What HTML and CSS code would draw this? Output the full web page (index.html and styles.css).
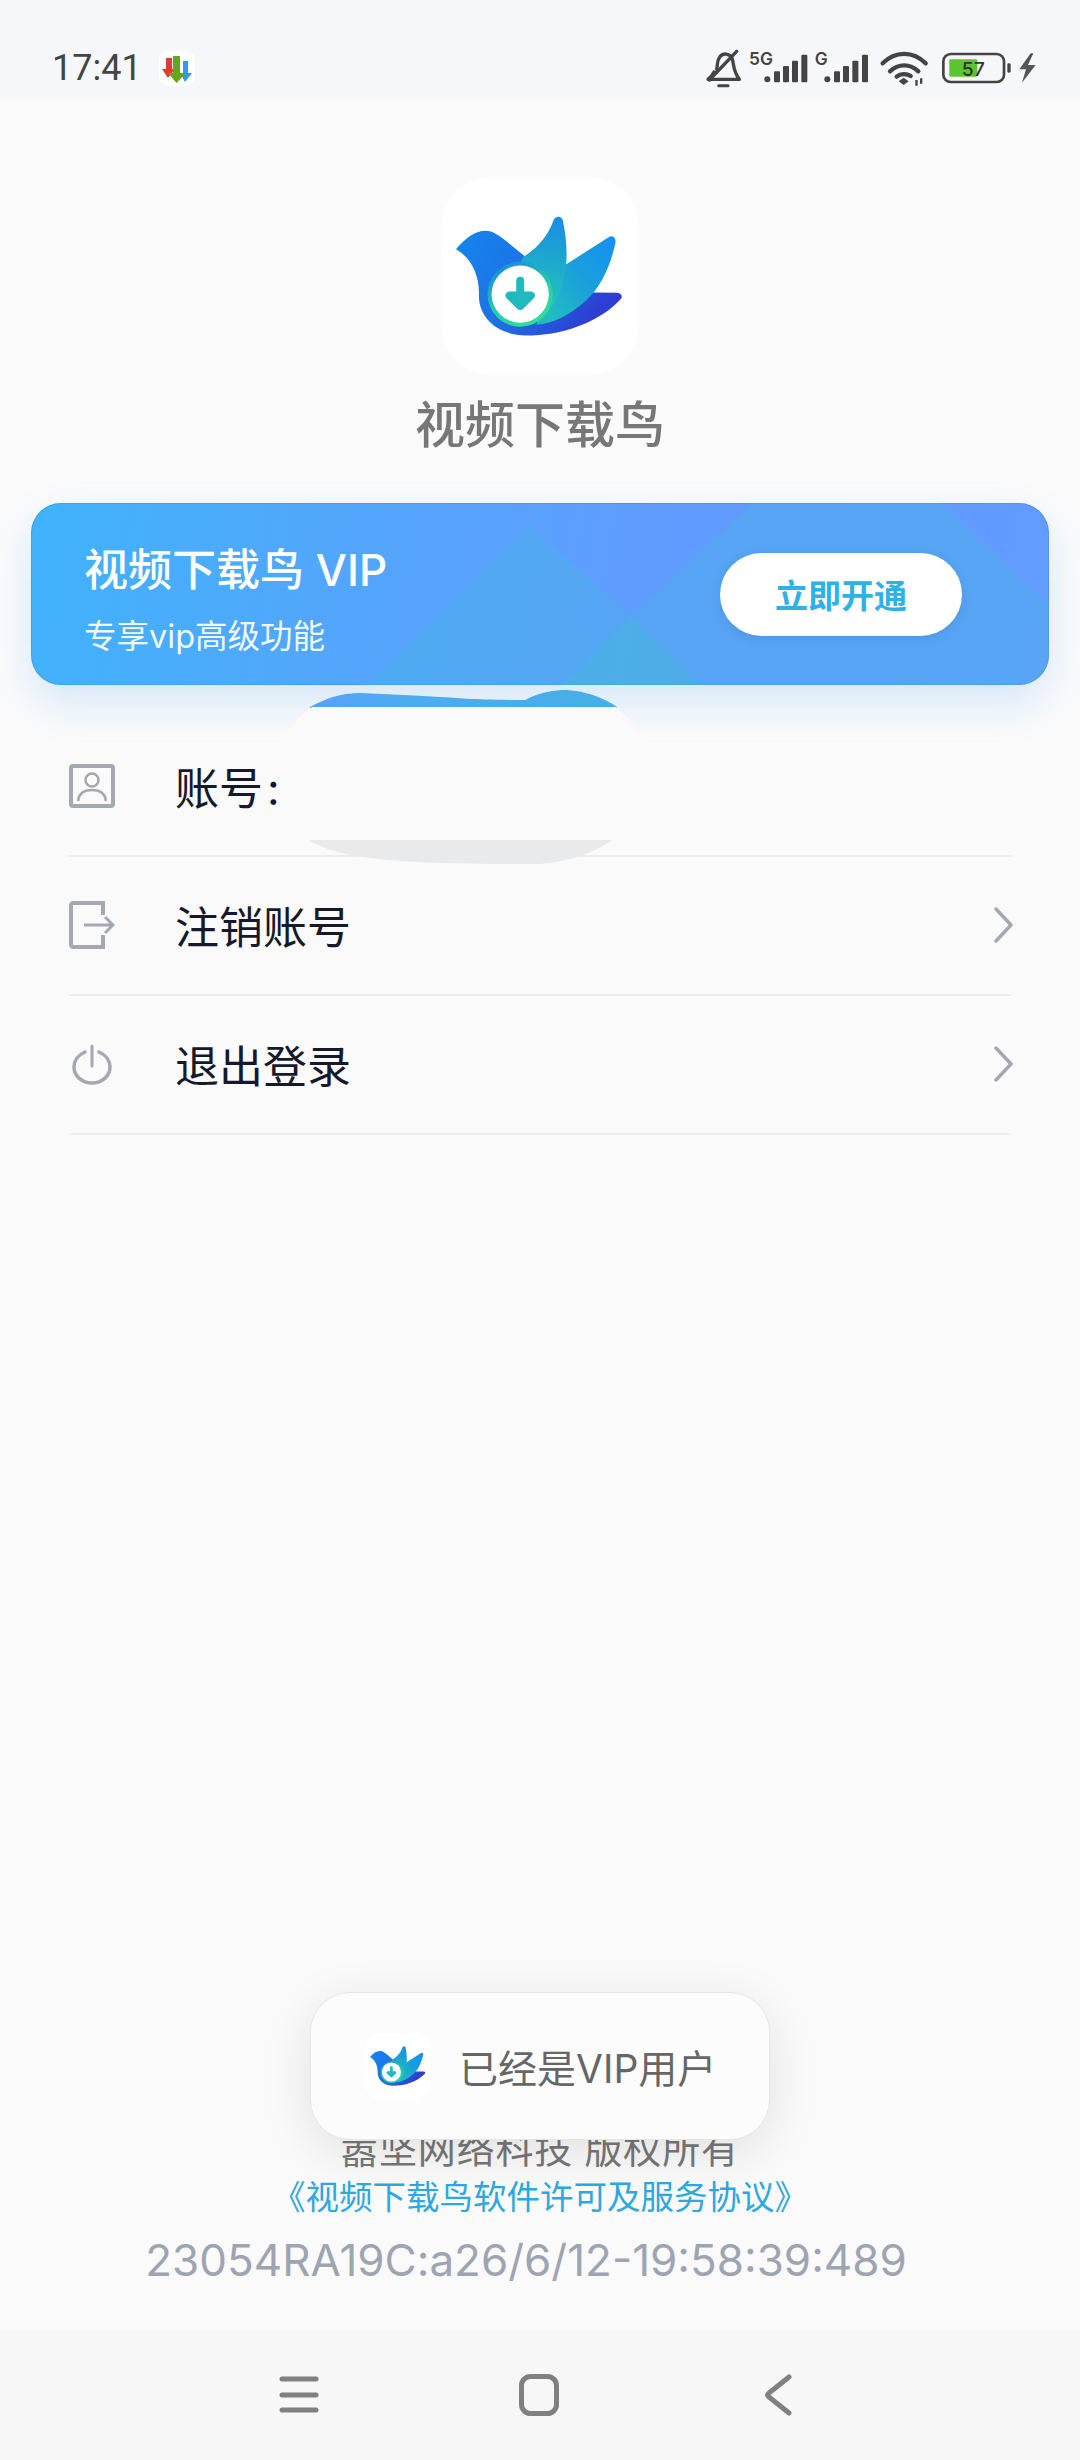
FILE: index.html
```html
<!DOCTYPE html>
<html lang="zh-CN">
<head>
<meta charset="utf-8">
<title>视频下载鸟</title>
<link rel="stylesheet" href="styles.css">
</head>
<body>
<svg class="defs" aria-hidden="true">
  <defs>
    <linearGradient id="gBody" x1="0" y1="0" x2="1" y2="0.4">
      <stop offset="0" stop-color="#1486ee"/><stop offset="0.55" stop-color="#1f6fe4"/><stop offset="1" stop-color="#2d3ed2"/>
    </linearGradient>
    <linearGradient id="gRight" x1="1" y1="0" x2="0" y2="1">
      <stop offset="0" stop-color="#1490f2"/><stop offset="0.45" stop-color="#1a9fdc"/><stop offset="0.85" stop-color="#20bcc0"/>
    </linearGradient>
    <linearGradient id="gMid" x1="0.6" y1="0" x2="0.5" y2="1">
      <stop offset="0" stop-color="#1a8ee2"/><stop offset="0.5" stop-color="#1db0c8"/><stop offset="0.85" stop-color="#22c9b4"/>
    </linearGradient>
    <linearGradient id="gRing" x1="0.2" y1="0" x2="0.7" y2="1">
      <stop offset="0" stop-color="#1a86e6"/><stop offset="0.55" stop-color="#25cda6"/><stop offset="1" stop-color="#2fe09a"/>
    </linearGradient>
    <symbol id="bird" viewBox="183 80 595 595">
      <rect x="183" y="80" width="595" height="595" rx="145" fill="#fff"/>
      <path fill="url(#gBody)" d="M228 297C262 256 298 235 330 243C362 252 396 290 432 316L470 360L640 427L712 428C728 430 730 442 720 450C650 522 540 556 440 556C350 556 294 500 297 432C298 372 272 322 228 297Z"/>
      <path fill="url(#gRight)" d="M555 345L688 260C700 254 710 264 707 278C692 350 660 415 620 450C570 495 520 520 470 524L500 400Z"/>
      <path fill="url(#gMid)" d="M430 320C478 292 508 250 522 208C528 196 546 196 549 210C562 270 566 340 550 395C532 465 490 510 440 526L380 440Z"/>
      <circle cx="421" cy="432" r="98" fill="url(#gRing)"/>
      <circle cx="421" cy="432" r="86" fill="#fff"/>
      <path fill="#20b9bf" d="M409 392a12 12 0 0 1 24 0V424H452C464 424 470 436 461 445L430 476C425 481 417 481 412 476L381 445C372 436 378 424 390 424H409Z"/>
    </symbol>
  </defs>
</svg>

<div class="page">
  <header class="status-bar">
    <div class="status-left">
      <span class="clock">17:41</span>
      <svg class="dl-icon" viewBox="0 0 36 35">
        <rect width="36" height="35" rx="9" fill="#fff"/>
        <path fill="#e23b32" d="M7 7H13V18H16L9 27L3 18H7Z"/>
        <path fill="#2e9bf0" d="M24 10H29V22H33L26 31L21 22H24Z"/>
        <path fill="#66a61e" d="M14 5H21V22H27L17.500 32L9 22H14Z"/>
      </svg>
    </div>
    <svg class="status-right" viewBox="0 0 1110 180">
      <g fill="none" stroke="#444" stroke-width="10" stroke-linecap="round" stroke-linejoin="round">
        <path d="M80 118C84 100 80 92 90 80C100 68 118 70 126 84C132 100 128 122 148 148H54C64 140 68 134 72 126"/>
        <path d="M58 150L140 64"/>
        <path d="M86 167H114" stroke-width="9"/>
      </g>
      <text class="sig-text" x="177" y="106">5G</text>
      <g fill="#444">
        <rect x="223" y="139" width="18" height="18" rx="9"/>
        <rect x="252" y="124" width="18" height="33" rx="3"/>
        <rect x="279" y="108" width="18" height="49" rx="3"/>
        <rect x="306" y="92" width="18" height="65" rx="3"/>
        <rect x="334" y="74" width="18" height="83" rx="3"/>
      </g>
      <text class="sig-text" x="374" y="106">G</text>
      <g fill="#444">
        <rect x="403" y="139" width="18" height="18" rx="9"/>
        <rect x="432" y="124" width="18" height="33" rx="3"/>
        <rect x="459" y="108" width="18" height="49" rx="3"/>
        <rect x="487" y="92" width="18" height="65" rx="3"/>
        <rect x="516" y="74" width="18" height="83" rx="3"/>
      </g>
      <g fill="none" stroke="#444" stroke-width="13" stroke-linecap="round">
        <path d="M578 100C615 62 670 62 707 100"/>
        <path d="M600 124C625 100 660 100 685 124"/>
        <path d="M620 140C632 130 650 130 662 138"/>
      </g>
      <path fill="#444" d="M641 143L656 154L641 165L626 154Z"/>
      <path fill="#444" d="M676 150h7v17h-7zM690 145h7v16h-7z"/>
      <rect x="760" y="72" width="182" height="84" rx="22" fill="none" stroke="#444" stroke-width="8"/>
      <rect x="778" y="88" width="84" height="52" rx="4" fill="#5bc52f"/>
      <text class="batt-text" x="850" y="139">57</text>
      <rect x="952" y="100" width="10" height="28" rx="4" fill="#444"/>
      <path fill="#555" d="M1022 70L988 118H1008L996 158L1037 105H1014L1030 70Z"/>
    </svg>
  </header>

  <main class="content">
    <section class="brand">
      <svg class="app-logo"><use href="#bird"/></svg>
      <h1 class="app-name">视频下载鸟</h1>
    </section>

    <section class="banner">
      <svg class="banner-bg" viewBox="31 503 1018 182" preserveAspectRatio="none">
        <path fill="#3ebcd6" fill-opacity="0.27" d="M367 685L530 525L630 617L753 503H940L1049 605V685Z"/>
        <path fill="#3cc2d0" fill-opacity="0.32" d="M563 685L630 617L700 685Z"/>
      </svg>
      <div class="banner-text">
        <div class="banner-title">视频下载鸟 VIP</div>
        <div class="banner-sub">专享vip高级功能</div>
      </div>
      <button class="banner-btn">立即开通</button>
    </section>

    <ul class="menu">
      <li class="menu-row">
        <svg class="menu-icon" viewBox="0 0 46 48">
          <rect x="2" y="4" width="42" height="40" rx="2" fill="none" stroke="#a3a8b3" stroke-width="4"/>
          <circle cx="23" cy="18" r="6.500" fill="none" stroke="#a3a8b3" stroke-width="2.500"/>
          <path d="M9 39C10 30 16 28 23 28C30 28 36 30 37 39" fill="none" stroke="#a3a8b3" stroke-width="2.500"/>
        </svg>
        <span class="menu-label">账号&#8202;:</span>
      </li>
      <li class="menu-row">
        <svg class="menu-icon" viewBox="0 0 46 48">
          <path d="M34 14V2H4C3 2 2 3 2 4V44C2 45 3 46 4 46H34V34" fill="none" stroke="#a3a8b3" stroke-width="4"/>
          <path d="M15 24H43M36 16L44 24L36 32" fill="none" stroke="#a3a8b3" stroke-width="3"/>
        </svg>
        <span class="menu-label">注销账号</span>
        <svg class="chevron" viewBox="0 0 20 36"><path d="M2 2L17 18L2 34" fill="none" stroke="#a3a8b3" stroke-width="3.500" stroke-linecap="round" stroke-linejoin="round"/></svg>
      </li>
      <li class="menu-row">
        <svg class="menu-icon" viewBox="0 0 46 48">
          <path d="M16 12C9 15 5 21 5 27C5 36 13 43 23 43C33 43 41 36 41 27C41 21 37 15 30 12" fill="none" stroke="#a3a8b3" stroke-width="3.500" stroke-linecap="round"/>
          <path d="M23 6V26" fill="none" stroke="#a3a8b3" stroke-width="3" stroke-linecap="round"/>
        </svg>
        <span class="menu-label">退出登录</span>
        <svg class="chevron" viewBox="0 0 20 36"><path d="M2 2L17 18L2 34" fill="none" stroke="#a3a8b3" stroke-width="3.500" stroke-linecap="round" stroke-linejoin="round"/></svg>
      </li>
    </ul>

    <footer class="legal">
      <div class="copyright">嚣坚网络科技 版权所有</div>
      <div class="agreement">《视频下载鸟软件许可及服务协议》</div>
      <div class="version">23054RA19C:a26/6/12-19:58:39:489</div>
    </footer>
  </main>

  <nav class="nav-bar">
    <svg class="nav-icon" viewBox="0 0 40 42">
      <path d="M3 5H37M3 21H37M3 36H37" fill="none" stroke="#808080" stroke-width="5" stroke-linecap="round"/>
    </svg>
    <svg class="nav-icon" viewBox="0 0 40 42">
      <rect x="2.500" y="2.500" width="35" height="37" rx="9" fill="none" stroke="#808080" stroke-width="5"/>
    </svg>
    <svg class="nav-icon" viewBox="0 0 40 42">
      <path d="M30 3L10 19C8 20.500 8 21.500 10 23L30 39" fill="none" stroke="#808080" stroke-width="5" stroke-linecap="round"/>
    </svg>
  </nav>

  <svg class="redaction" viewBox="0 0 400 190">
    <defs>
      <linearGradient id="gScrib" x1="0" y1="0" x2="1" y2="0">
        <stop offset="0" stop-color="#5aa0fb"/><stop offset="0.3" stop-color="#4dabf0"/><stop offset="1" stop-color="#46aee6"/>
      </linearGradient>
    </defs>
    <path fill="url(#gScrib)" d="M40 27C60 16 75 13 90 13C120 14 150 16 170 17C190 18 205 20 255 20C270 12 285 10 297 10C315 11 335 18 347 27L347 40H40Z"/>
    <path fill="#e9eaec" d="M38 160C60 172 80 177 130 181C170 184 220 184 270 184C295 182 320 175 343 160V150H38Z"/>
    <path fill="#fafafb" d="M42 27H346C368 45 378 70 378 92C378 120 365 145 343 160H38C15 140 7 115 7 92C7 68 20 42 42 27Z"/>
  </svg>

  <div class="toast">
    <svg class="toast-logo"><use href="#bird"/></svg>
    <span class="toast-text">已经是VIP用户</span>
  </div>
</div>
</body>
</html>
```

FILE: styles.css
```css
* { box-sizing: border-box; }

html, body {
  margin: 0;
  padding: 0;
}

body {
  font-family: "Inter", "Noto Sans CJK SC", sans-serif;
  background: #fafafb;
}

.defs {
  position: absolute;
  width: 0;
  height: 0;
}

.page {
  position: relative;
  width: 1080px;
  height: 2460px;
  display: flex;
  flex-direction: column;
  overflow: hidden;
  background: #fafafb;
}

/* status bar */
.status-bar {
  flex: none;
  height: 100px;
  padding: 30px 20px 0 52px;
  display: flex;
  justify-content: space-between;
  align-items: flex-start;
  background: #f6f7fb;
}

.status-left {
  height: 76px;
  display: flex;
  align-items: center;
  gap: 17px;
}

.clock {
  font-family: "Roboto", sans-serif;
  font-size: 36px;
  font-weight: 400;
  color: #444;
}

.dl-icon {
  width: 36px;
  height: 35px;
}

.status-right {
  width: 370px;
  height: 60px;
}

.sig-text {
  font-family: "Inter", sans-serif;
  font-size: 52px;
  font-weight: 600;
  fill: #444;
}

.batt-text {
  font-family: "Inter", sans-serif;
  font-size: 58px;
  font-weight: 500;
  fill: #333;
  text-anchor: middle;
}

/* content */
.content {
  flex: 1;
  display: flex;
  flex-direction: column;
}

.brand {
  padding-top: 77px;
  display: flex;
  flex-direction: column;
  align-items: center;
}

.app-logo {
  width: 198px;
  height: 198px;
}

.app-name {
  margin: 20px 0 0;
  font-size: 50px;
  line-height: 60px;
  font-weight: 500;
  color: #777;
}

/* banner */
.banner {
  position: relative;
  margin: 48px 31px 0;
  height: 182px;
  padding: 0 87px 0 53px;
  display: flex;
  justify-content: space-between;
  align-items: center;
  border-radius: 30px;
  overflow: visible;
  background: linear-gradient(100deg, #40b3fc 0%, #52a6fc 30%, #5f9cfe 60%, #639bff 100%);
  box-shadow: 0 18px 40px rgba(70, 160, 240, 0.2), inset 0 0 0 1px rgba(40, 120, 190, 0.25);
}

.banner-bg {
  position: absolute;
  inset: 0;
  width: 100%;
  height: 100%;
  border-radius: 30px;
}

.banner-text {
  position: relative;
  align-self: flex-start;
  padding-top: 37px;
  color: #fff;
}

.banner-title {
  font-size: 44px;
  line-height: 60px;
  font-weight: 500;
  white-space: pre;
}

.banner-sub {
  margin-top: 15px;
  font-size: 32.500px;
  line-height: 44px;
  opacity: 0.92;
}

.banner-btn {
  position: relative;
  width: 242px;
  height: 83px;
  padding: 0;
  border: 0;
  border-radius: 42px;
  background: #fff;
  box-shadow: 0 3px 10px rgba(40, 100, 170, 0.2);
  font-family: inherit;
  font-size: 33px;
  font-weight: 600;
  color: #2fb0e6;
}

/* menu */
.menu {
  list-style: none;
  margin: 33px 69px 0;
  padding: 0;
}

.menu-row {
  height: 139px;
  padding-bottom: 2px;
  display: flex;
  align-items: center;
  border-bottom: 2px solid #ecedf0;
}

.menu-icon {
  flex: none;
  width: 46px;
  height: 48px;
  margin-right: 60px;
}

.menu-label {
  font-size: 44px;
  color: #15192b;
}

.chevron {
  width: 20px;
  height: 36px;
  margin-left: auto;
  margin-right: -3px;
}

/* footer */
.legal {
  margin-top: auto;
  padding-bottom: 40px;
  display: flex;
  flex-direction: column;
  align-items: center;
}

.copyright {
  font-size: 38px;
  line-height: 44px;
  letter-spacing: 0.800px;
  color: #777;
}

.agreement {
  margin-top: 4px;
  font-size: 33.500px;
  line-height: 44px;
  color: #2ea8e0;
}

.version {
  margin-top: 11px;
  padding-right: 28px;
  font-size: 44px;
  line-height: 60px;
  color: #9ea5b2;
  white-space: nowrap;
}

/* navigation */
.nav-bar {
  flex: none;
  height: 130px;
  padding-right: 2px;
  display: flex;
  justify-content: center;
  align-items: center;
  gap: 200px;
  background: #f7f7f7;
}

.nav-icon {
  width: 40px;
  height: 42px;
}

/* overlays */
.redaction {
  position: absolute;
  left: 270px;
  top: 680px;
  width: 400px;
  height: 190px;
}

.toast {
  position: absolute;
  left: 310px;
  top: 1992px;
  width: 460px;
  height: 148px;
  padding-left: 54px;
  display: flex;
  align-items: center;
  gap: 28px;
  border: 1px solid #e6e6e6;
  border-radius: 40px;
  background: #fcfcfc;
  box-shadow: 0 12px 50px rgba(0, 0, 0, 0.1);
}

.toast-logo {
  flex: none;
  width: 66px;
  height: 66px;
}

.toast-text {
  font-size: 39px;
  color: #666;
  white-space: nowrap;
}
```
